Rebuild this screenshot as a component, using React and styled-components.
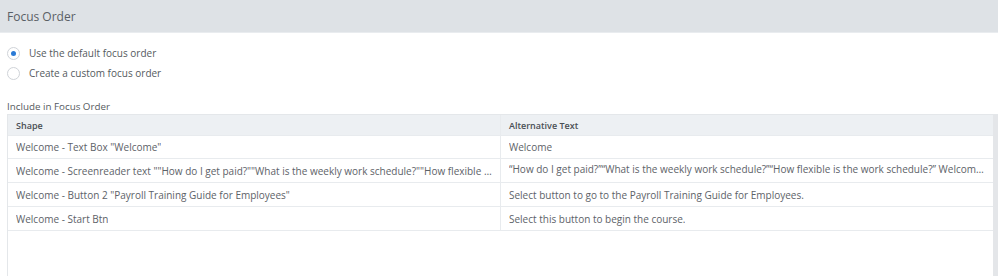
import React, { useState } from "react";
import styled, { createGlobalStyle } from "styled-components";

const GlobalStyle = createGlobalStyle`
  html, body {
    margin: 0;
    padding: 0;
    background: #ffffff;
    font-family: "Open Sans", "Noto Sans", sans-serif;
    color: #555a60;
  }
`;

const Panel = styled.div`
  width: 998px;
  height: 276px;
  overflow: hidden;
  display: flex;
  flex-direction: column;
`;

const Header = styled.div`
  height: 33px;
  flex: none;
  background: #dee2e6;
  border-bottom: 1px solid #e9ecef;
  box-sizing: border-box;
  display: flex;
  align-items: center;
  padding-left: 7px;
  font-size: 12px;
  color: #5a5f65;
`;

const Body = styled.div`
  padding: 11px 0 0 7px;
  display: flex;
  flex-direction: column;
  flex: 1;
  min-height: 0;
`;

const RadioGroup = styled.div`
  display: flex;
  flex-direction: column;
  gap: 2px;
`;

const RadioRow = styled.label`
  display: flex;
  align-items: center;
  height: 18px;
  font-size: 10px;
  color: #555a60;
  cursor: pointer;
`;

const RadioCircle = styled.span`
  width: 13px;
  height: 13px;
  box-sizing: border-box;
  border-radius: 50%;
  border: 1px solid #cfd3d8;
  background: #fff;
  margin-right: 9px;
  display: flex;
  align-items: center;
  justify-content: center;

  &::after {
    content: "";
    width: 5px;
    height: 5px;
    border-radius: 50%;
    background: ${(p) => (p.checked ? "#2b7bd6" : "transparent")};
  }
`;

const SectionLabel = styled.div`
  margin-top: 18px;
  font-size: 9.8px;
  color: #555a60;
  height: 13px;
  line-height: 13px;
`;

const TableWrap = styled.div`
  margin-top: 1px;
  flex: 1;
  display: flex;
  border-left: 1px solid #e4e7ea;
  border-top: 1px solid #e4e7ea;
`;

const Table = styled.div`
  flex: 1;
  display: flex;
  flex-direction: column;
`;

const ScrollStrip = styled.div`
  width: 5px;
  flex: none;
  background: #e4e6e9;
`;

const Row = styled.div`
  display: grid;
  grid-template-columns: 492px 1fr;
  height: ${(p) => (p.head ? "20px" : p.short ? "22px" : "23px")};
  background: ${(p) => (p.head ? "#edf0f3" : "#fff")};
  border-bottom: 1px solid #e8ebee;
`;

const Cell = styled.div`
  padding-left: 8px;
  padding-right: 6px;
  display: flex;
  align-items: ${(p) => (p.top ? "flex-start" : "center")};
  padding-top: ${(p) => (p.top ? "3px" : "0")};
  font-size: ${(p) => (p.head ? "9px" : "10px")};
  font-weight: ${(p) => (p.head ? 600 : 400)};
  color: ${(p) => (p.head ? "#4a4f55" : "#5d6268")};
  border-left: ${(p) => (p.second ? "1px solid #e8ebee" : "none")};
  overflow: hidden;
  white-space: nowrap;
  min-width: 0;

  span {
    overflow: hidden;
    text-overflow: ellipsis;
  }
`;

const rows = [
  ["Welcome - Text Box \"Welcome\"", "Welcome"],
  [
    "Welcome - Screenreader text \"\"How do I get paid?\"\"What is the weekly work schedule?\"\"How flexible is the work schedule?\" Welcome",
    "\u201cHow do I get paid?\u201d\u201cWhat is the weekly work schedule?\u201d\u201cHow flexible is the work schedule?\u201d Welcome to the course",
  ],
  [
    "Welcome - Button 2 \"Payroll Training Guide for Employees\"",
    "Select button to go to the Payroll Training Guide for Employees.",
  ],
  ["Welcome - Start Btn", "Select this button to begin the course."],
];

export default function App() {
  const [mode, setMode] = useState("default");
  return (
    <Panel>
      <GlobalStyle />
      <Header>Focus Order</Header>
      <Body>
        <RadioGroup>
          <RadioRow onClick={() => setMode("default")}>
            <RadioCircle checked={mode === "default"} />
            Use the default focus order
          </RadioRow>
          <RadioRow onClick={() => setMode("custom")}>
            <RadioCircle checked={mode === "custom"} />
            Create a custom focus order
          </RadioRow>
        </RadioGroup>
        <SectionLabel>Include in Focus Order</SectionLabel>
        <TableWrap>
          <Table>
            <Row head>
              <Cell head>Shape</Cell>
              <Cell head second>Alternative Text</Cell>
            </Row>
            {rows.map((r, i) => (
              <Row key={i} short={i === 0}>
                <Cell><span>{r[0]}</span></Cell>
                <Cell second top={i === 1}><span>{r[1]}</span></Cell>
              </Row>
            ))}
          </Table>
          <ScrollStrip />
        </TableWrap>
      </Body>
    </Panel>
  );
}
